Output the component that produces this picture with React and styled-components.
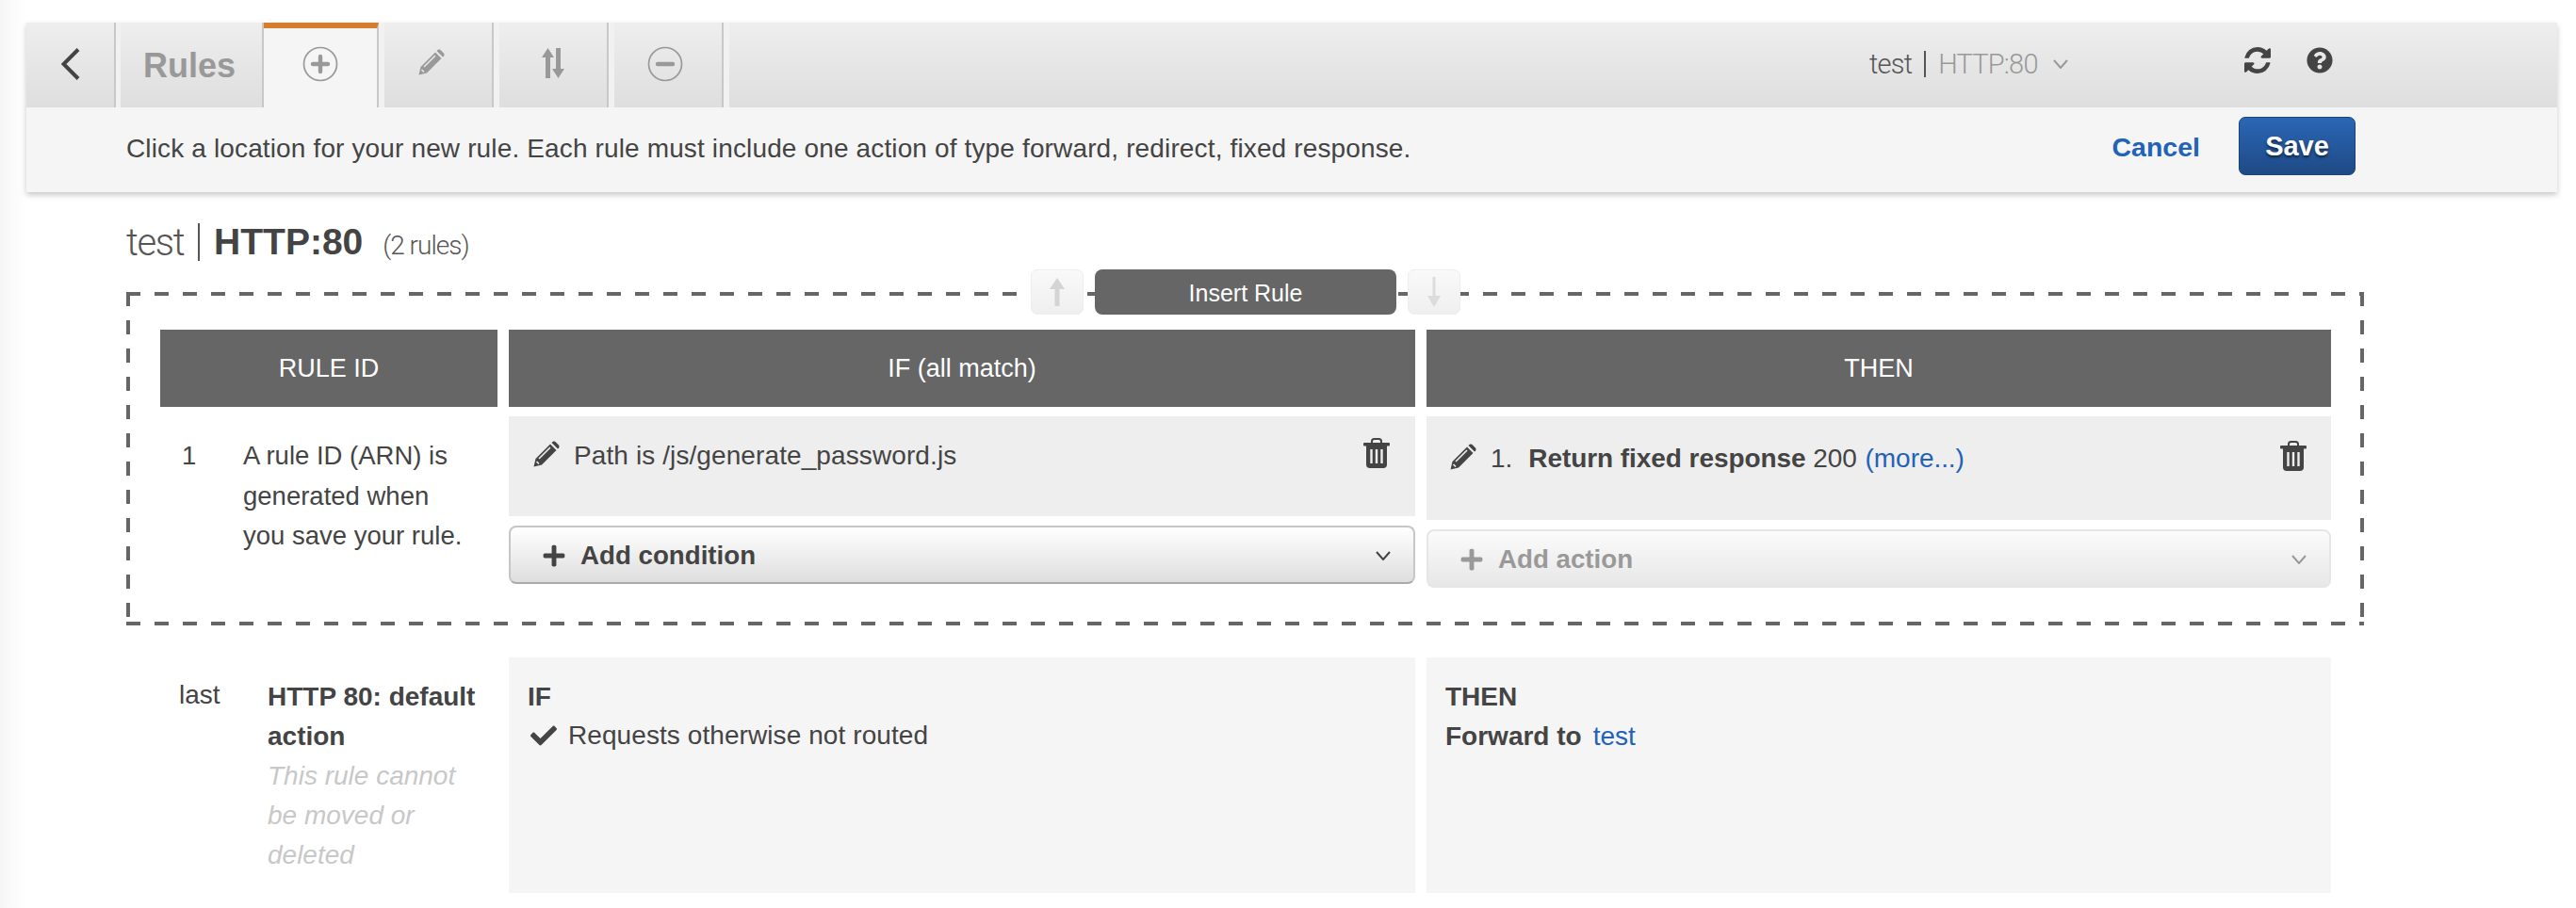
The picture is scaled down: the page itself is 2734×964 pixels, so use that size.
import React from "react";
import styled, { createGlobalStyle } from "styled-components";
import { FaCheck, FaPlus, FaQuestionCircle } from "react-icons/fa";

const Global = createGlobalStyle`
  html, body { margin: 0; padding: 0; background: #fff; }
  body { font-family: "Liberation Sans", Arial, sans-serif; font-size: 28px; color: #444; overflow: hidden; }
  * { box-sizing: border-box; }
`;

const COLS = "358px 962px 960px";
const tabGrad = "linear-gradient(#eeeeee, #dedede)";

const Page = styled.div`
  width: 2734px;
  height: 964px;
  padding: 24px 20px 0 28px;
  background: linear-gradient(90deg, #f6f6f6, #ffffff 28px);
`;
const Toolbar = styled.header`
  box-shadow: 0 3px 6px rgba(0, 0, 0, 0.22);
`;
const TabBar = styled.div`
  display: flex;
  height: 90px;
  background: #f1f1f1;
`;
const Tab = styled.div`
  width: ${(p) => p.$w}px;
  margin-right: ${(p) => p.$m ?? 6}px;
  border-right: 2px solid #c8c8c8;
  border-top: ${(p) => (p.$active ? "6px solid #d67d2e" : "none")};
  background: ${(p) => (p.$active ? "#f5f5f5" : tabGrad)};
  display: flex;
  align-items: center;
  justify-content: center;
  color: #999;
  padding-right: ${(p) => p.$pr || 0}px;
  padding-bottom: ${(p) => p.$pb ?? (p.$active ? 8 : 2)}px;
`;
const RulesLabel = styled.span`
  font-size: 36px;
  font-weight: 700;
  color: #999;
  padding: 4px 4px 0 0;
`;
const TabRest = styled.div`
  flex: 1;
  background: ${tabGrad};
  display: flex;
  align-items: flex-start;
  padding: 26px 0 0 1210px;
`;
const Selector = styled.div`
  display: flex;
  align-items: center;
  font-family: Roboto, "Liberation Sans", sans-serif;
  font-weight: 300;
  font-size: 29px;
  letter-spacing: -0.8px;
  line-height: 36px;
  color: #555;
  width: 398px;
`;
const SelectorSep = styled.span`
  width: 2px;
  height: 28px;
  background: #555;
  margin: 0 13px 0 13px;
`;
const SelectorValue = styled.span`
  color: #999;
`;
const ToolIcons = styled.div`
  display: flex;
  gap: 38px;
  color: #444;
`;
const NoticeBar = styled.div`
  display: flex;
  align-items: center;
  height: 90px;
  background: #f5f5f5;
  padding: 0 214px 0 106px;
`;
const Notice = styled.p`
  flex: 1;
  margin: 0 0 2px;
  font-size: 28px;
  color: #444;
  letter-spacing: 0.14px;
`;
const CancelLink = styled.a`
  color: #2262b8;
  font-weight: 700;
  font-size: 28.5px;
  margin: 0 41px 6px 0;
`;
const SaveButton = styled.button`
  width: 124px;
  height: 62px;
  margin-bottom: 8px;
  border: 1px solid #1b4478;
  border-radius: 7px;
  background: linear-gradient(#2b66b6, #1e4a85);
  color: #fff;
  font: 700 29px "Liberation Sans", Arial, sans-serif;
  text-shadow: 0 2px 3px rgba(0, 0, 0, 0.6);
`;
const Content = styled.main`
  padding-left: 106px;
`;
const Heading = styled.h1`
  display: flex;
  align-items: center;
  margin: 0;
  height: 106px;
  font-weight: 300;
`;
const HeadLight = styled.span`
  font-family: Roboto, "Liberation Sans", sans-serif;
  font-weight: 300;
  font-size: 40px;
  letter-spacing: -1.4px;
  color: #555;
`;
const HeadSep = styled.span`
  width: 2px;
  height: 40px;
  background: #555;
  margin: 0 15px 0 15px;
`;
const HeadBold = styled.span`
  font-size: 39px;
  font-weight: 700;
  color: #444;
`;
const HeadCount = styled.span`
  font-family: Roboto, "Liberation Sans", sans-serif;
  font-weight: 300;
  font-size: 28px;
  letter-spacing: -1px;
  color: #555;
  margin: 6px 0 0 21px;
`;
const Frame = styled.section`
  position: relative;
  width: 2375px;
  height: 354px;
  padding: 40px 36px;
  background:
    repeating-linear-gradient(90deg, #666 0 15px, transparent 15px 30px) top left / 100% 4px no-repeat,
    repeating-linear-gradient(90deg, #666 0 15px, transparent 15px 30px) bottom left / 100% 4px no-repeat,
    repeating-linear-gradient(180deg, #666 0 15px, transparent 15px 30px) top left / 4px 100% no-repeat,
    repeating-linear-gradient(180deg, #666 0 15px, transparent 15px 30px) top right / 4px 100% no-repeat;
`;
const InsertGroup = styled.div`
  position: absolute;
  top: -24px;
  left: 960px;
  display: flex;
  gap: 12px;
`;
const ArrowButton = styled.button`
  width: 56px;
  height: 48px;
  padding: 0;
  border: 1px solid #eeeeee;
  border-radius: 7px;
  background: linear-gradient(#f9f9f9, #efefef);
  display: flex;
  align-items: center;
  justify-content: center;
`;
const InsertButton = styled.button`
  width: 320px;
  height: 48px;
  padding: 2px 0 0;
  border: 0;
  border-radius: 8px;
  background: #666;
  color: #fff;
  font: 400 25px "Liberation Sans", Arial, sans-serif;
`;
const Grid = styled.div`
  display: grid;
  grid-template-columns: ${COLS};
  gap: 10px 12px;
`;
const HeaderCell = styled.div`
  height: 82px;
  background: #666;
  color: #fff;
  font-size: 27px;
  display: flex;
  align-items: center;
  justify-content: center;
`;
const RuleIdCell = styled.div`
  display: flex;
  padding: 21px 0 0 23px;
  line-height: 42.5px;
  font-size: 27.5px;
`;
const RuleNumber = styled.span`
  width: 65px;
`;
const RuleText = styled.span`
  width: 240px;
`;
const Stack = styled.div`
  display: flex;
  flex-direction: column;
  gap: 10px;
`;
const ActionCell = styled.div`
  height: ${(p) => p.$h}px;
  background: #eeeeee;
  padding: ${(p) => p.$top}px ${(p) => p.$right}px 0 ${(p) => p.$left}px;
  display: flex;
  align-items: flex-start;
  line-height: 36px;
`;
const CellText = styled.span`
  flex: 1;
  margin-left: ${(p) => p.$gap}px;
  letter-spacing: ${(p) => p.$track || 0}px;
`;
const Strong = styled.strong`
  font-weight: 700;
  margin-left: ${(p) => p.$gap || 0}px;
`;
const Link = styled.a`
  color: #2262b8;
  margin-left: ${(p) => p.$gap || 0}px;
`;
const DropButton = styled.div`
  height: 62px;
  display: flex;
  align-items: center;
  gap: 15px;
  padding: 2px 24px 0 ${(p) => p.$left}px;
  border-radius: 8px;
  border: 2px solid ${(p) => (p.$disabled ? "#e6e6e6" : "#c6c6c6")};
  border-bottom-color: ${(p) => (p.$disabled ? "#e6e6e6" : "#aaaaaa")};
  background: ${(p) =>
    p.$disabled ? "linear-gradient(#fbfbfb, #e7e7e7)" : "linear-gradient(#ffffff, #dedede)"};
  color: ${(p) => (p.$disabled ? "#999" : "#444")};
  font-size: 27.7px;
  font-weight: 700;
`;
const DropLabel = styled.span`
  flex: 1;
`;
const DefaultRow = styled(Grid)`
  margin: 34px 0 0 36px;
  height: 250px;
`;
const LastCell = styled.div`
  display: flex;
  padding: 21px 0 0 20px;
  line-height: 42px;
`;
const LastLabel = styled.span`
  width: 94px;
  margin-top: -2px;
`;
const LastBody = styled.div`
  width: 244px;
`;
const Muted = styled.em`
  display: block;
  width: 205px;
  color: #c8c8c8;
`;
const DefaultCell = styled.div`
  background: #f5f5f5;
  padding: 21px 20px;
  line-height: 42px;
`;
const BoldLine = styled.div`
  font-weight: 700;
`;
const CheckLine = styled.div`
  display: flex;
  align-items: center;
  gap: 12px;
  margin-top: -1px;
  letter-spacing: 0.08px;
`;
const Icon = styled.span`
  display: inline-flex;
  flex: none;
  margin-top: ${(p) => p.$mt || 0}px;
  margin-left: ${(p) => p.$ml || 0}px;
  color: ${(p) => p.$color || "#444"};
`;

const Chevron = ({ w = 16, h = 10, c = "#444", sw = 2 }) => (
  <svg width={w} height={h} viewBox="0 0 16 10">
    <polyline points="1,1 8,9 15,1" fill="none" stroke={c} strokeWidth={sw} />
  </svg>
);
const Pencil = ({ s = 28, streak = "#eeeeee" }) => (
  <svg width={s} height={s} viewBox="0 0 28 28">
    <path d="M0.5 27.5 L2.5 19 L18 3.5 L24.5 10 L9 25.5 Z" fill="currentColor" />
    <path d="M19.5 2 L20.8 0.8 Q22 0 23.2 0.8 L27.2 4.8 Q28 6 27.2 7.2 L26 8.5 Z" fill="currentColor" />
    <path d="M6 19 L18 7 M3.5 22 L6 24.5" stroke={streak} strokeWidth="1.6" fill="none" />
  </svg>
);
const Trash = ({ w = 28, h = 32 }) => (
  <svg width={w} height={h} viewBox="0 0 28 32">
    <path d="M9 6 V3.5 Q9 1 11.5 1 H16.5 Q19 1 19 3.5 V6" fill="none" stroke="currentColor" strokeWidth="2" />
    <rect x="0" y="5" width="28" height="3.5" rx="1" fill="currentColor" />
    <path d="M3 8 H25 V28 Q25 32 21 32 H7 Q3 32 3 28 Z" fill="currentColor" />
    <path d="M8.5 12 V27 M14 12 V27 M19.5 12 V27" stroke="#eeeeee" strokeWidth="2.4" />
  </svg>
);
const CircleSign = ({ plus }) => (
  <svg width="38" height="38" viewBox="0 0 38 38">
    <circle cx="19" cy="19" r="17.5" fill="none" stroke="#999" strokeWidth="1.7" />
    <path d={plus ? "M11 19 H27 M19 11 V27" : "M11 19 H27"} stroke="#999" strokeWidth="4.4" strokeLinecap="round" fill="none" />
  </svg>
);
const Sort = () => (
  <svg width="24" height="32" viewBox="0 0 24 32">
    <path d="M6.5 0 L13 10 H9 V32 H4 V10 H0 Z M15 0 H20 V22 H24 L17.5 32 L11 22 H15 Z" fill="#999" />
  </svg>
);
const Refresh = () => (
  <svg width="28" height="28" viewBox="128 128 1536 1536">
    <path
      fill="currentColor"
      d="M1639 1056q0 5-1 7-64 268-268 434.5t-478 166.5q-146 0-282.500-55t-243.500-157l-129 129q-19 19-45 19t-45-19-19-45v-448q0-26 19-45t45-19h448q26 0 45 19t19 45-19 45l-137 137q71 66 161 102t187 36q134 0 250-65t186-179q11-17 53-117 8-23 30-23h192q13 0 22.500 9.500t9.500 22.500zm25-800v448q0 26-19 45t-45 19h-448q-26 0-45-19t-19-45 19-45l138-138q-148-137-349-137-134 0-250 65t-186 179q-11 17-53 117-8 23-30 23h-199q-13 0-22.500-9.500t-9.500-22.500v-7q65-268 270-434.500t480-166.500q146 0 284 55.500t245 156.500l130-129q19-19 45-19t45 19 19 45z"
    />
  </svg>
);
const ArrowUp = () => (
  <svg width="18" height="30" viewBox="0 0 18 30">
    <path d="M9 0 L17 12 H11.500 V30 H6.500 V12 H1 Z" fill="#d4d4d4" />
  </svg>
);
const ArrowDown = () => (
  <svg width="18" height="32" viewBox="0 0 18 32">
    <path d="M7.500 0 H10.500 V20 H16 L9 32 L2 20 H7.500 Z" fill="#dcdcdc" />
  </svg>
);

export default function App() {
  return (
    <Page>
      <Global />
      <Toolbar>
        <TabBar>
          <Tab $w={95} $m={5}>
            <svg width="20" height="34" viewBox="0 0 20 34">
              <polyline points="18,1.500 2.500,17 18,32.500" fill="none" stroke="#444" strokeWidth="4" />
            </svg>
          </Tab>
          <Tab $w={152} $m={0}>
            <RulesLabel>Rules</RulesLabel>
          </Tab>
          <Tab $w={122} $active>
            <CircleSign plus />
          </Tab>
          <Tab $w={116} $pr={14} $pb={6}>
            <Pencil streak="#e6e6e6" />
          </Tab>
          <Tab $w={116} $pb={4}>
            <Sort />
          </Tab>
          <Tab $w={116} $pr={6}>
            <CircleSign />
          </Tab>
          <TabRest>
            <Selector>
              test
              <SelectorSep />
              <SelectorValue>HTTP:80</SelectorValue>
              <Icon $ml={16}>
                <Chevron c="#999" />
              </Icon>
            </Selector>
            <ToolIcons>
              <Refresh />
              <FaQuestionCircle size={28} />
            </ToolIcons>
          </TabRest>
        </TabBar>
        <NoticeBar>
          <Notice>
            Click a location for your new rule. Each rule must include one action of type forward, redirect, fixed
            response.
          </Notice>
          <CancelLink>Cancel</CancelLink>
          <SaveButton>Save</SaveButton>
        </NoticeBar>
      </Toolbar>
      <Content>
        <Heading>
          <HeadLight>test</HeadLight>
          <HeadSep />
          <HeadBold>HTTP:80</HeadBold>
          <HeadCount>(2 rules)</HeadCount>
        </Heading>
        <Frame>
          <InsertGroup>
            <ArrowButton>
              <ArrowUp />
            </ArrowButton>
            <InsertButton>Insert Rule</InsertButton>
            <ArrowButton>
              <ArrowDown />
            </ArrowButton>
          </InsertGroup>
          <Grid>
            <HeaderCell>RULE ID</HeaderCell>
            <HeaderCell>IF (all match)</HeaderCell>
            <HeaderCell>THEN</HeaderCell>
            <RuleIdCell>
              <RuleNumber>1</RuleNumber>
              <RuleText>A rule ID (ARN) is generated when you save your rule.</RuleText>
            </RuleIdCell>
            <Stack>
              <ActionCell $h={106} $top={24} $left={26} $right={27}>
                <Icon $mt={2}>
                  <Pencil />
                </Icon>
                <CellText $gap={15} $track={0.1}>
                  Path is /js/generate_password.js
                </CellText>
                <Icon $mt={-1}>
                  <Trash />
                </Icon>
              </ActionCell>
              <DropButton $left={33}>
                <FaPlus size={26} />
                <DropLabel>Add condition</DropLabel>
                <Chevron />
              </DropButton>
            </Stack>
            <Stack>
              <ActionCell $h={110} $top={27} $left={25} $right={26}>
                <Icon $mt={2}>
                  <Pencil />
                </Icon>
                <CellText $gap={15} $track={-0.06}>
                  1.
                  <Strong $gap={17}>Return fixed response</Strong> 200 <Link $gap={1}>(more...)</Link>
                </CellText>
                <Icon $mt={-1}>
                  <Trash />
                </Icon>
              </ActionCell>
              <DropButton $left={33} $disabled>
                <FaPlus size={26} />
                <DropLabel>Add action</DropLabel>
                <Chevron c="#999" />
              </DropButton>
            </Stack>
          </Grid>
        </Frame>
        <DefaultRow>
          <LastCell>
            <LastLabel>last</LastLabel>
            <LastBody>
              <BoldLine>HTTP 80: default action</BoldLine>
              <Muted>This rule cannot be moved or deleted</Muted>
            </LastBody>
          </LastCell>
          <DefaultCell>
            <BoldLine>IF</BoldLine>
            <CheckLine>
              <Icon $ml={3}>
                <FaCheck size={28} />
              </Icon>
              Requests otherwise not routed
            </CheckLine>
          </DefaultCell>
          <DefaultCell>
            <BoldLine>THEN</BoldLine>
            <div>
              <Strong>Forward to</Strong>
              <Link $gap={12}>test</Link>
            </div>
          </DefaultCell>
        </DefaultRow>
      </Content>
    </Page>
  );
}
